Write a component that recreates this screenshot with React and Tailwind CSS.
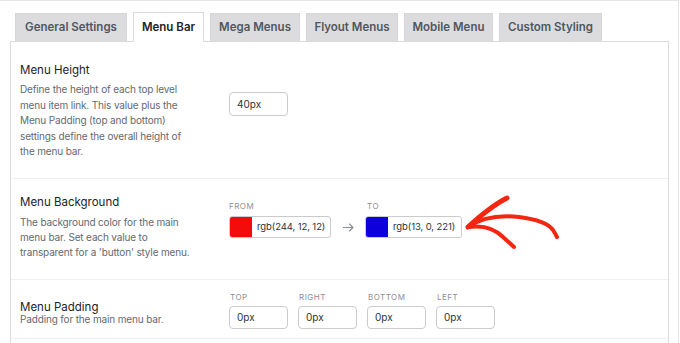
import React from "react";

const tabs = [
  { name: "General Settings", w: "w-[112px]" },
  { name: "Menu Bar", w: "w-[71px]" },
  { name: "Mega Menus", w: "w-[90px]" },
  { name: "Flyout Menus", w: "w-[92px]" },
  { name: "Mobile Menu", w: "w-[89px]" },
  { name: "Custom Styling", w: "w-[103px]" },
];

const Label = ({ children }) => (
  <div className="text-[8px] leading-[10px] tracking-[0.06em] uppercase text-[#8c8f94]">{children}</div>
);

const TextBox = ({ value, h = "h-[23px]" }) => (
  <div className={`w-[59px] ${h} border border-[#c9cbcf] rounded-[4px] pl-[7px] flex items-center text-[10px] text-[#2c3338]`}>
    {value}
  </div>
);

const ColorBox = ({ swatch, value, w }) => (
  <div className={`${w} h-[22px] flex border border-[#c9cbcf] rounded-[3px] overflow-hidden`}>
    <div className="w-[22px] h-full shrink-0" style={{ background: swatch }}></div>
    <div className="pl-[5px] flex items-center text-[9.5px] tracking-[-0.01em] text-[#2c3338] whitespace-nowrap">{value}</div>
  </div>
);

export default function App() {
  return (
    <div className="relative w-[680px] h-[343px] overflow-hidden bg-white font-['Inter','Liberation_Sans',sans-serif]">
      <div className="w-[679px] h-full border-t border-r border-[#e4e5e7] pl-[10px] pt-[11px]">

        {/* Tabs */}
        <div className="relative z-10 flex items-end gap-[6px] pl-[5px]">
          {tabs.map((t) =>
            t.name === "Menu Bar" ? (
              <div key={t.name} className={`${t.w} h-[30px] flex items-center justify-center bg-white border border-b-0 border-[#dcdcde] text-[11.5px] font-semibold text-[#1d2327]`}>
                {t.name}
              </div>
            ) : (
              <div key={t.name} className={`${t.w} h-[28px] mb-px flex items-center justify-center bg-[#dcdcde] border border-[#d6d6d8] border-b-0 text-[11.5px] font-semibold text-[#50575e]`}>
                {t.name}
              </div>
            )
          )}
        </div>

        {/* Panel */}
        <div className="w-[659px] h-[320px] -mt-px border border-[#dcdcde] border-b-0">

          {/* Menu Height */}
          <div className="flex h-[137px] border-b border-[#efeff0]">
            <div className="w-[218px] pl-[9px] pt-[19px]">
              <div className="text-[11.5px] leading-[18px] text-[#1d2327]">Menu Height</div>
              <div className="mt-[3px] text-[10px] tracking-[-0.015em] leading-[15.5px] text-[#646970]">
                Define the height of each top level<br />
                menu item link. This value plus the<br />
                Menu Padding (top and bottom)<br />
                settings define the overall height of<br />
                the menu bar.
              </div>
            </div>
            <div className="pt-[50px]">
              <TextBox value="40px" h="h-[24px]" />
            </div>
          </div>

          {/* Menu Background */}
          <div className="flex h-[101px] border-b border-[#efeff0]">
            <div className="w-[218px] pl-[9px] pt-[14px]">
              <div className="text-[11.5px] leading-[18px] text-[#1d2327]">Menu Background</div>
              <div className="mt-[4px] text-[10px] tracking-[-0.015em] leading-[15px] text-[#646970]">
                The background color for the main<br />
                menu bar. Set each value to<br />
                transparent for a 'button' style menu.
              </div>
            </div>
            <div className="pt-[22px] flex items-start">
              <div>
                <Label>From</Label>
                <div className="mt-[5px]">
                  <ColorBox swatch="rgb(244, 12, 12)" value="rgb(244, 12, 12)" w="w-[102px]" />
                </div>
              </div>
              <div className="mt-[15px] w-[34px] h-[22px] flex items-center justify-center text-[#8c8f94]">
                <svg width="11" height="9" viewBox="0 0 11 9" fill="none" stroke="currentColor" strokeWidth="1.1" strokeLinecap="round" strokeLinejoin="round">
                  <path d="M0.5 4.5 H10 M6.5 1 L10 4.5 L6.5 8" />
                </svg>
              </div>
              <div>
                <div className="pl-[2px]"><Label>To</Label></div>
                <div className="mt-[5px]">
                  <ColorBox swatch="rgb(13, 0, 221)" value="rgb(13, 0, 221)" w="w-[97px]" />
                </div>
              </div>
            </div>
          </div>

          {/* Menu Padding */}
          <div className="flex h-[59px] border-b border-[#efeff0]">
            <div className="w-[218px] pl-[9px] pt-[19px]">
              <div className="text-[11.5px] leading-[16px] text-[#1d2327]">Menu Padding</div>
              <div className="mt-[-3px] text-[10px] tracking-[-0.015em] leading-[15px] text-[#646970]">Padding for the main menu bar.</div>
            </div>
            <div className="pt-[12px] flex gap-[10px]">
              {["Top", "Right", "Bottom", "Left"].map((s) => (
                <div key={s}>
                  <div className="pl-px"><Label>{s}</Label></div>
                  <div className="mt-[4px]">
                    <TextBox value="0px" />
                  </div>
                </div>
              ))}
            </div>
          </div>
        </div>
      </div>

      {/* Annotation arrow */}
      <svg className="absolute left-[455px] top-[185px]" width="120" height="80" viewBox="0 0 120 80" fill="none" stroke="#f4260f" strokeLinecap="round" strokeLinejoin="round">
        <path d="M13 42 C 26 33, 45 30, 64 32 C 80 34, 93 38, 98 45 C 100 48, 101 50, 102 52" strokeWidth="4" />
        <path d="M13 42 C 24 32, 38 20, 52 13" strokeWidth="5" />
        <path d="M14 42 C 28 40, 40 44, 48 52 L 59 62" strokeWidth="4" />
      </svg>
    </div>
  );
}
